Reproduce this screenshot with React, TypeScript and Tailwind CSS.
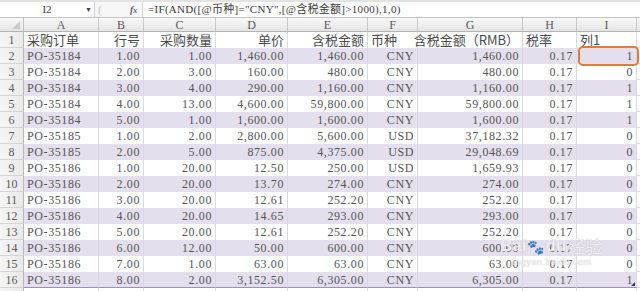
import React from 'react';

const COLS = [
  { key: 'A', w: 'w-[75px]', head: '采购订单', headAlign: 'left', align: 'left' },
  { key: 'B', w: 'w-[45px]', head: '行号', headAlign: 'right', align: 'right' },
  { key: 'C', w: 'w-[72px]', head: '采购数量', headAlign: 'right', align: 'right' },
  { key: 'D', w: 'w-[72px]', head: '单价', headAlign: 'right', align: 'right' },
  { key: 'E', w: 'w-[80px]', head: '含税金额', headAlign: 'right', align: 'right' },
  { key: 'F', w: 'w-[50px]', head: '币种', headAlign: 'left', align: 'right' },
  { key: 'G', w: 'w-[105px]', head: '含税金额（RMB）', headAlign: 'right', align: 'right' },
  { key: 'H', w: 'w-[54px]', head: '税率', headAlign: 'left', align: 'right' },
  { key: 'I', w: 'w-[60px]', head: '列1', headAlign: 'left', align: 'right' },
];

const ROWS: string[][] = [
  ['PO-35184', '1.00', '1.00', '1,460.00', '1,460.00', 'CNY', '1,460.00', '0.17', '1'],
  ['PO-35184', '2.00', '3.00', '160.00', '480.00', 'CNY', '480.00', '0.17', '0'],
  ['PO-35184', '3.00', '4.00', '290.00', '1,160.00', 'CNY', '1,160.00', '0.17', '1'],
  ['PO-35184', '4.00', '13.00', '4,600.00', '59,800.00', 'CNY', '59,800.00', '0.17', '1'],
  ['PO-35184', '5.00', '1.00', '1,600.00', '1,600.00', 'CNY', '1,600.00', '0.17', '1'],
  ['PO-35185', '1.00', '2.00', '2,800.00', '5,600.00', 'USD', '37,182.32', '0.17', '0'],
  ['PO-35185', '2.00', '5.00', '875.00', '4,375.00', 'USD', '29,048.69', '0.17', '0'],
  ['PO-35186', '1.00', '20.00', '12.50', '250.00', 'USD', '1,659.93', '0.17', '0'],
  ['PO-35186', '2.00', '20.00', '13.70', '274.00', 'CNY', '274.00', '0.17', '0'],
  ['PO-35186', '3.00', '20.00', '12.61', '252.20', 'CNY', '252.20', '0.17', '0'],
  ['PO-35186', '4.00', '20.00', '14.65', '293.00', 'CNY', '293.00', '0.17', '0'],
  ['PO-35186', '5.00', '20.00', '12.61', '252.20', 'CNY', '252.20', '0.17', '0'],
  ['PO-35186', '6.00', '12.00', '50.00', '600.00', 'CNY', '600.00', '0.17', '0'],
  ['PO-35186', '7.00', '1.00', '63.00', '63.00', 'CNY', '63.00', '0.17', '0'],
  ['PO-35186', '8.00', '2.00', '3,152.50', '6,305.00', 'CNY', '6,305.00', '0.17', '1'],
];

function RowHeader({ n }: { n?: number }) {
  return (
    <div className="w-[24px] shrink-0 flex items-center justify-center bg-gradient-to-r from-[#f6f6f6] to-[#e9e9e9] border-r border-[#b9b9b9] border-b border-b-[#d5d5d5] text-[12px] text-[#5a5a5a]">
      {n}
    </div>
  );
}

function FormulaBar() {
  return (
    <div className="h-[18px] flex bg-white border-b border-[#c4c4c4] border-t-2 border-t-[#e3e3e3] text-[11px] text-[#3a3a3a]">
      <div className="w-[95px] shrink-0 relative flex items-center justify-center border-r border-[#d0d0d0]">
        <span>I2</span>
        <span className="absolute left-[85px] top-[3px] text-[7px] text-[#444]">▼</span>
      </div>
      <div className="w-[48px] shrink-0 flex items-center bg-[#f7f7f7] border-r border-[#d6d6d6]">
        <span className="ml-[3px] text-[#c8c8c8] text-[12px] leading-none">(</span>
        <span className="ml-[28px] italic font-bold text-[#666] text-[10px] leading-none">
          f<span className="text-[8px]">x</span>
        </span>
      </div>
      <div className="flex-1 flex items-center pl-[5px] tracking-[0.3px]">
        =IF(AND([@币种]="CNY",[@含税金额]&gt;1000),1,0)
      </div>
    </div>
  );
}

export default function App() {
  return (
    <div className="relative w-[640px] h-[291px] overflow-hidden bg-white text-[#555] font-['Liberation_Serif','Noto_Sans_CJK_SC',serif]">
      <FormulaBar />

      {/* column letters */}
      <div className="h-[14px] flex bg-gradient-to-b from-[#f9f9f9] to-[#e4e4e4] border-b border-[#b5b5b5] text-[12px] text-[#5a5a5a]">
        <div className="w-[24px] shrink-0 relative border-r border-[#c2c2c2]">
          <span className="absolute right-[3px] bottom-[2px] w-0 h-0 border-l-[8px] border-l-transparent border-b-[8px] border-b-[#c9c9c9]" />
        </div>
        {COLS.map((c) => (
          <div
            key={c.key}
            className={`${c.w} shrink-0 flex items-center justify-center border-r border-[#c9c9c9] leading-none`}
          >
            {c.key}
          </div>
        ))}
        <div className="flex-1" />
      </div>

      {/* header row */}
      <div className="h-[16px] flex bg-white">
        <RowHeader n={1} />
        {COLS.map((c) => (
          <div
            key={c.key}
            className={`${c.w} shrink-0 flex items-center whitespace-nowrap border-r border-[#dadada] text-[13px] text-[#4a4a4a] font-['Noto_Sans_CJK_SC',sans-serif] ${
              c.headAlign === 'left' ? 'justify-start pl-[3px]' : 'justify-end pr-[3px]'
            }`}
          >
            {c.head}
          </div>
        ))}
        <div className="flex-1 border-b border-[#dadada]" />
      </div>

      {ROWS.map((r, i) => {
        const purple = i % 2 === 0;
        const last = i === ROWS.length - 1;
        return (
          <div key={i} className="h-[16px] flex">
            <RowHeader n={i + 2} />
            {r.map((v, j) => (
              <div
                key={j}
                className={`${COLS[j].w} shrink-0 relative flex items-center text-[12px] tracking-[0.6px] whitespace-nowrap border-r ${
                  purple ? 'bg-[#e4dfec] border-[#ddd7e6]' : 'bg-white border-[#dadada]'
                } ${last ? 'border-b border-b-[#9d91b3]' : ''} ${
                  COLS[j].align === 'left' ? 'justify-start pl-[3px]' : 'justify-end pr-[3px]'
                }`}
              >
                {v}
                {last && j === 8 && (
                  <span className="absolute right-[1px] bottom-[1px] w-0 h-0 border-l-[4px] border-l-transparent border-b-[4px] border-b-[#3a3a3a]" />
                )}
              </div>
            ))}
            <div className="flex-1 border-b border-[#dadada]" />
          </div>
        );
      })}

      {/* row 17, only its top edge shows */}
      <div className="h-[16px] flex">
        <RowHeader />
        {COLS.map((c) => (
          <div key={c.key} className={`${c.w} shrink-0 border-r border-[#dadada]`} />
        ))}
      </div>

      {/* selection annotation */}
      <div className="absolute left-[578px] top-[46px] w-[61px] h-[20px] border-2 border-[#e27b36] rounded-[5px]" />

      {/* watermark */}
      <div className="absolute left-[500px] top-[237px] flex flex-col items-center text-white/80 [text-shadow:0_0_1px_#a8a8a8]">
        <div className="flex items-end font-['Liberation_Sans',sans-serif] font-bold text-[17px] leading-none">
          <span>Bai</span>
          <span className="text-[14px] mx-[1px]">🐾</span>
          <span>du</span>
          <span className="ml-[2px] font-['Noto_Sans_CJK_SC',sans-serif] font-normal text-[17px]">经验</span>
        </div>
        <div className="text-[9px] font-['Liberation_Sans',sans-serif] leading-none mt-[4px] tracking-[0.5px]">
          jingyan.baidu.com
        </div>
      </div>
    </div>
  );
}
